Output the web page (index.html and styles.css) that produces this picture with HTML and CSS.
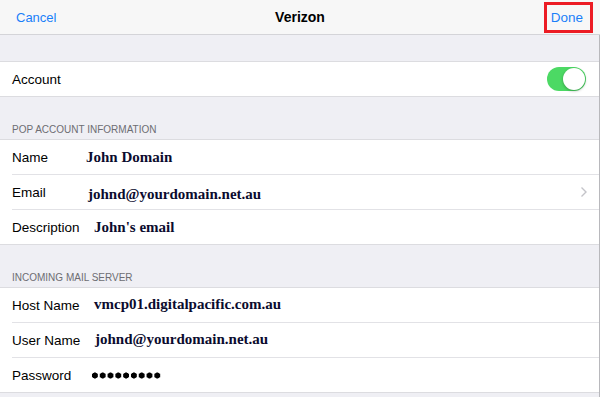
FILE: index.html
```html
<!DOCTYPE html>
<html lang="en">
<head>
    <meta charset="UTF-8">
    <meta name="viewport" content="width=device-width, initial-scale=1.0">
    <title>Verizon</title>
    <link rel="stylesheet" href="styles.css">
</head>
<body>
    <div class="navbar">
        <span class="nav-btn cancel">Cancel</span>
        <span class="nav-title">Verizon</span>
        <span class="nav-btn done">Done</span>
    </div>

    <div class="content">
        <div class="spacer"></div>

        <div class="group">
            <div class="row row-account">
                <span class="label">Account</span>
                <span class="toggle"><span class="knob"></span></span>
            </div>
        </div>

        <div class="section-header">POP ACCOUNT INFORMATION</div>
        <div class="group">
            <div class="row">
                <span class="label">Name</span>
                <span class="value v-name">John Domain</span>
            </div>
            <div class="row">
                <span class="label">Email</span>
                <span class="value v-email">johnd@yourdomain.net.au</span>
                <svg class="chevron" width="8" height="12" viewBox="0 0 8 12">
                    <path d="M1.5 1.5 L6 6 L1.5 10.5" fill="none" stroke="#c4c4c9" stroke-width="1.4"/>
                </svg>
            </div>
            <div class="row">
                <span class="label">Description</span>
                <span class="value v-desc">John's email</span>
            </div>
        </div>

        <div class="section-header">INCOMING MAIL SERVER</div>
        <div class="group">
            <div class="row">
                <span class="label">Host Name</span>
                <span class="value v-host">vmcp01.digitalpacific.com.au</span>
            </div>
            <div class="row">
                <span class="label">User Name</span>
                <span class="value v-user">johnd@yourdomain.net.au</span>
            </div>
            <div class="row">
                <span class="label">Password</span>
                <span class="dots" title="password"></span>
            </div>
        </div>
    </div>
</body>
</html>
```

FILE: styles.css
```css
body {
    margin: 0;
    font-family: "Liberation Sans", Arial, sans-serif;
    background-color: #efeff4;
    color: #000;
    height: 397px;
    overflow: hidden;
}

.navbar {
    height: 34px;
    background-color: #f7f7f7;
    border-bottom: 1px solid #d4d4d8;
    display: flex;
    align-items: center;
    justify-content: space-between;
    position: relative;
    padding: 0 7px 0 16px;
}

.nav-btn {
    font-size: 13px;
    color: #1a7ff9;
}

.nav-title {
    position: absolute;
    left: 0;
    right: 0;
    text-align: center;
    font-size: 14px;
    font-weight: bold;
    pointer-events: none;
}

.done {
    font-size: 13.5px;
    border: 3px solid #ec1c24;
    padding: 4px 7px 4px 4px;
    line-height: 17px;
    margin-top: 1px;
}

.content {
    border-right: 1px solid #b8b8bc;
    height: 362px;
}

.spacer {
    height: 26px;
}

.group {
    background: #fff;
    border-top: 1px solid #dcdce0;
    border-bottom: 1px solid #dcdce0;
    padding-left: 12px;
}

.row {
    height: 34px;
    display: flex;
    align-items: center;
    padding-right: 12px;
}

.row + .row {
    border-top: 1px solid #e2e2e6;
}

.label {
    font-size: 13.5px;
    width: 70px;
    flex-shrink: 0;
}

.value {
    font-family: "Liberation Serif", "Times New Roman", serif;
    font-weight: bold;
    font-size: 15px;
    color: #0b0b2e;
    margin-left: 12px;
}

.v-name { margin-left: 4px; }
.v-email { margin-left: 6px; margin-top: 5px; }
.v-desc { margin-left: 12px; }
.v-host { margin-left: 12px; margin-top: -2px; }
.v-user { margin-left: 13px; margin-top: -2px; }

.chevron {
    margin-left: auto;
    margin-right: -1px;
}

.toggle {
    margin-left: auto;
    width: 39px;
    height: 24px;
    border-radius: 12px;
    background: #4cd964;
    position: relative;
    margin-right: 1px;
}

.knob {
    position: absolute;
    right: 1px;
    top: 1px;
    width: 22px;
    height: 22px;
    border-radius: 50%;
    background: #fff;
    box-shadow: 0 1px 3px rgba(0, 0, 0, 0.3);
}

.section-header {
    height: 42px;
    box-sizing: border-box;
    padding: 0 12px 4px;
    display: flex;
    align-items: flex-end;
    font-size: 10px;
    color: #6d6d72;
}

.dots {
    margin-left: 9px;
    width: 70px;
    height: 7px;
    background: radial-gradient(circle, #000 2.8px, transparent 3.3px) 0 0 / 7.8px 7px repeat-x;
}
```
